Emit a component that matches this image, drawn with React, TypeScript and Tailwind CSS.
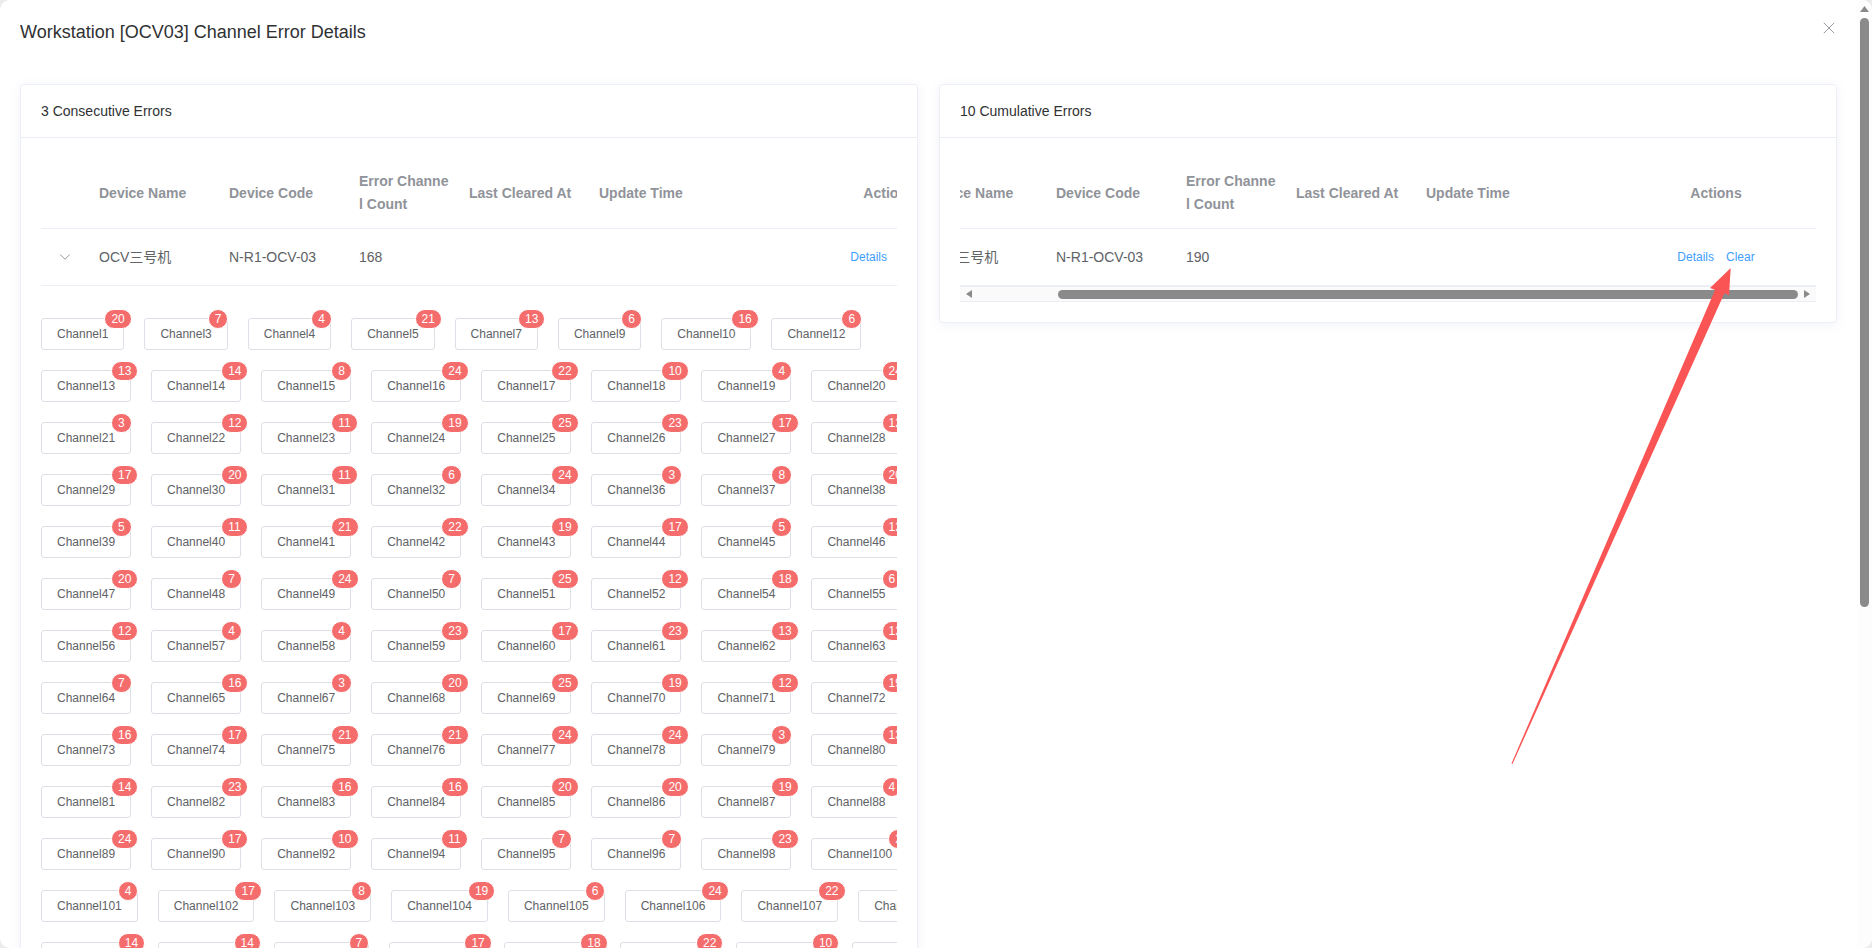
import { ChevronDown, X } from "lucide-react"

// [channel label, error count], in wrap order
const CHANNEL_ERRORS: [string, number][] = [
    ["1", 20], ["3", 7], ["4", 4], ["5", 21], ["7", 13], ["9", 6], ["10", 16], ["12", 6],
    ["13", 13], ["14", 14], ["15", 8], ["16", 24], ["17", 22], ["18", 10], ["19", 4], ["20", 24],
    ["21", 3], ["22", 12], ["23", 11], ["24", 19], ["25", 25], ["26", 23], ["27", 17], ["28", 12],
    ["29", 17], ["30", 20], ["31", 11], ["32", 6], ["34", 24], ["36", 3], ["37", 8], ["38", 20],
    ["39", 5], ["40", 11], ["41", 21], ["42", 22], ["43", 19], ["44", 17], ["45", 5], ["46", 12],
    ["47", 20], ["48", 7], ["49", 24], ["50", 7], ["51", 25], ["52", 12], ["54", 18], ["55", 6],
    ["56", 12], ["57", 4], ["58", 4], ["59", 23], ["60", 17], ["61", 23], ["62", 13], ["63", 12],
    ["64", 7], ["65", 16], ["67", 3], ["68", 20], ["69", 25], ["70", 19], ["71", 12], ["72", 19],
    ["73", 16], ["74", 17], ["75", 21], ["76", 21], ["77", 24], ["78", 24], ["79", 3], ["80", 13],
    ["81", 14], ["82", 23], ["83", 16], ["84", 16], ["85", 20], ["86", 20], ["87", 19], ["88", 4],
    ["89", 24], ["90", 17], ["92", 10], ["94", 11], ["95", 7], ["96", 7], ["98", 23], ["100", 20],
    ["101", 4], ["102", 17], ["103", 8], ["104", 19], ["105", 6], ["106", 24], ["107", 22], ["108", 12],
    ["109", 14], ["110", 14], ["111", 7], ["112", 17], ["113", 18], ["114", 22], ["115", 10], ["116", 9],
]

function ChannelTag({ label, count }: { label: string; count: number }) {
    return (
        <button className="relative flex h-8 items-center rounded-[3px] border border-[#dcdfe6] bg-white px-[15px] text-xs text-[#606266]">
            Channel{label}
            <span className="absolute left-[calc(100%-19px)] top-[-10px] box-content h-[18px] rounded-full border border-white bg-[#f56c6c] px-[6px] text-xs leading-[18px] text-white">
                {count}
            </span>
        </button>
    )
}

function TableHead() {
    return (
        <div className="flex h-[71px] items-center border-b border-[#ebeef5] text-sm font-bold leading-[23px] text-[#909399]">
            <div className="w-[48px]" />
            <div className="w-[130px] px-[10px]">Device Name</div>
            <div className="w-[130px] px-[10px]">Device Code</div>
            <div className="w-[110px] break-all px-[10px]">Error Channel Count</div>
            <div className="w-[130px] px-[10px]">Last Cleared At</div>
            <div className="w-[200px] px-[10px]">Update Time</div>
            <div className="w-[200px] px-[10px] text-center">Actions</div>
        </div>
    )
}

function TableRow({ count, expanded, canClear }: { count: number; expanded?: boolean; canClear?: boolean }) {
    return (
        <div className="flex h-[57px] items-center border-b border-[#ebeef5] text-sm text-[#606266]">
            <div className="flex w-[48px] justify-center">
                {expanded && <ChevronDown size={18} strokeWidth={1.3} className="text-[#909399]" />}
            </div>
            <div className="w-[130px] px-[10px]">OCV三号机</div>
            <div className="w-[130px] px-[10px]">N-R1-OCV-03</div>
            <div className="w-[110px] px-[10px]">{count}</div>
            <div className="w-[130px] px-[10px]" />
            <div className="w-[200px] px-[10px]" />
            <div className="flex w-[200px] justify-center gap-3 px-[10px] text-xs text-[#409eff]">
                <span>Details</span>
                <span className={canClear ? "" : "invisible"}>Clear</span>
            </div>
        </div>
    )
}

function ErrorCard({ title, children }: { title: string; children: React.ReactNode }) {
    return (
        <section className="w-[898px] shrink-0 self-start rounded border border-[#edeff7] bg-white shadow-[0_2px_12px_0_rgba(70,90,190,0.07)]">
            <div className="flex h-[53px] items-center border-b border-[#ebeef5] px-5 text-sm text-[#303133]">{title}</div>
            <div className="p-5">{children}</div>
        </section>
    )
}

function HorizontalScrollbar() {
    return (
        <div className="flex h-4 items-center border-y border-[#ebeef5] bg-[#fafafa] pl-[6px]">
            <svg width="6" height="8" viewBox="0 0 6 8"><path d="M6 0v8L0 4z" fill="#8a8a8a" /></svg>
            <div className="ml-[86px] h-[9px] w-[740px] rounded-full bg-[#8a8a8a]" />
            <svg className="ml-[6px]" width="6" height="8" viewBox="0 0 6 8"><path d="M0 0v8l6-4z" fill="#8a8a8a" /></svg>
        </div>
    )
}

export default function App() {
    return (
        <div className="relative h-screen overflow-hidden bg-[#ececec] font-['Liberation_Sans','Noto_Sans_CJK_SC',sans-serif]">
            <div className="flex h-full overflow-hidden rounded-[10px] bg-white">
                <main className="relative min-w-0 flex-1">
                    <h1 className="px-5 pb-[40px] pt-5 text-lg font-normal leading-6 text-[#303133]">
                        Workstation [OCV03] Channel Error Details
                    </h1>
                    <X size={20} strokeWidth={1.1} className="absolute right-[18px] top-[18px] text-[#909399]" />

                    <div className="flex gap-[21px] px-5">
                        <ErrorCard title="3 Consecutive Errors">
                            <div className="overflow-hidden">
                                <div className="w-[948px]">
                                    <TableHead />
                                    <TableRow count={168} expanded />
                                    <div className="flex w-[926px] flex-wrap gap-5 pt-8">
                                        {CHANNEL_ERRORS.map(([label, count]) => (
                                            <ChannelTag key={label} label={label} count={count} />
                                        ))}
                                    </div>
                                </div>
                            </div>
                        </ErrorCard>

                        <ErrorCard title="10 Cumulative Errors">
                            <div className="overflow-hidden">
                                <div className="ml-[-92px] w-[948px]">
                                    <TableHead />
                                    <TableRow count={190} canClear />
                                </div>
                            </div>
                            <HorizontalScrollbar />
                        </ErrorCard>
                    </div>
                </main>

                {/* 세로 스크롤바 */}
                <aside className="flex w-[15px] shrink-0 flex-col rounded-t-[10px] bg-[#fdfdfd] pl-[3px] pt-[6px]">
                    <svg width="9" height="6" viewBox="0 0 9 6"><path d="M4.5 0L9 6H0z" fill="#8a8a8a" /></svg>
                    <div className="mt-[6px] h-[589px] w-[9px] rounded-full bg-[#8a8a8a]" />
                </aside>
            </div>

            {/* annotation arrow drawn over the screenshot */}
            <svg className="pointer-events-none absolute inset-0" width="1872" height="948" viewBox="0 0 1872 948">
                <polygon
                    points="1730.7,268 1729,295.5 1724.5,293 1512.5,764 1511.5,763.5 1715,290 1710,288"
                    fill="#fb5454"
                />
            </svg>
        </div>
    )
}
